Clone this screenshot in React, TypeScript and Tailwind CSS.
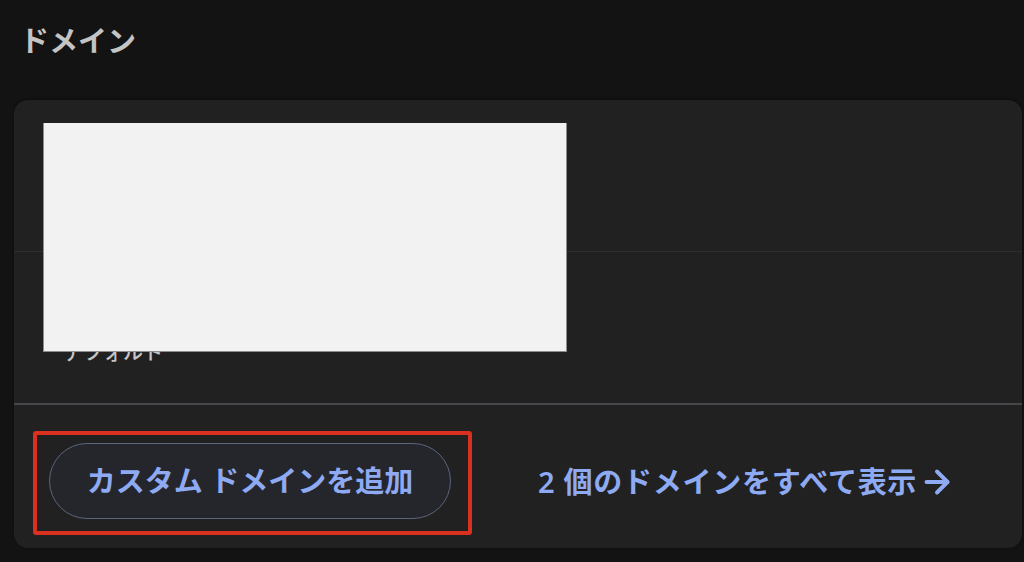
import { ArrowRight } from "lucide-react";

const domains = [
  { name: "example.com", label: "" },
  { name: "example.web.app", label: "デフォルト" },
];

export default function App() {
  return (
    <div
      className="h-[562px] w-[1024px] overflow-hidden bg-[#131313] pl-[14px] pr-[2px] text-[#c6c6c6]"
      style={{ fontFamily: '"Noto Sans", "Noto Sans CJK JP", sans-serif' }}
    >
      {/* Heading */}
      <h1 className="flex h-[100px] items-start pl-[6px] pt-[20px] text-[29px] font-semibold leading-[42px] text-[#c4c4c4]">
        ドメイン
      </h1>

      {/* Domain card */}
      <div className="relative flex h-[448px] flex-col rounded-[14px] bg-[#212121] shadow-[0_-1px_3px_rgba(0,0,0,0.4)]">
        {domains.map((d, i) => (
          <div
            key={d.name}
            className={
              i === 0
                ? "flex h-[152px] flex-col border-b border-[#2e2e2e] pl-[49px] pt-[40px]"
                : "flex h-[153px] flex-col border-b-2 border-[#46474a] pl-[49px] pt-[40px]"
            }
          >
            <span className="text-[29px] leading-[40px] text-[#e3e3e3]">{d.name}</span>
            {d.label && (
              <span className="mt-[7px] text-[20px] font-medium leading-[28px] text-[#c6c6c6]">{d.label}</span>
            )}
          </div>
        ))}

        {/* Actions */}
        <div className="flex flex-1 items-start pl-[19px] pt-[26px]">
          <div className="rounded-[3px] border-4 border-[#d9301f] pb-[12px] pl-[12px] pr-[17px] pt-[8px]">
            <button className="flex h-[76px] w-[402px] items-center justify-center rounded-full border-[1.5px] border-[#5b6580] bg-[#25262b] text-[29px] font-semibold text-[#8eaaf3]">
              カスタム ドメインを追加
            </button>
          </div>
          <a className="ml-[66px] mt-[31px] flex items-center gap-[2px] text-[29px] font-semibold leading-[40px] tracking-[0.025em] text-[#8eaaf3]">
            2 個のドメインをすべて表示
            <ArrowRight size={36} strokeWidth={2.6} />
          </a>
        </div>

        {/* Redaction block over the domain names */}
        <div className="absolute left-[29px] top-[23px] h-[229px] w-[524px] border-x border-b border-[#8c8c8c] bg-[#f2f2f2]" />
      </div>
    </div>
  );
}
